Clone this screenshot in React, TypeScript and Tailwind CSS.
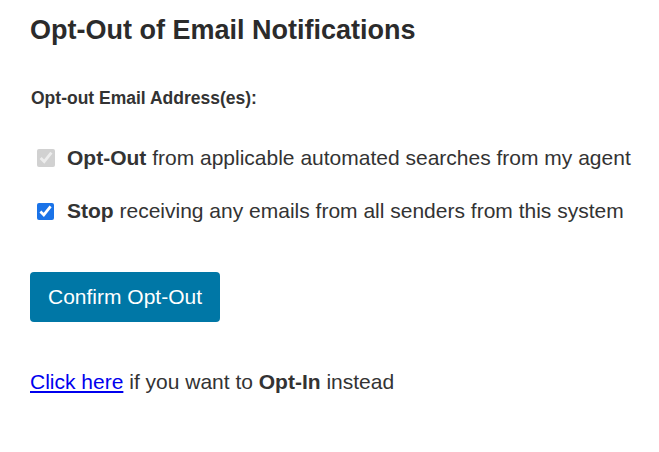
import React from "react";

export default function App() {
  return (
    <div className="w-[659px] h-[452px] bg-white text-[#333] pl-[31px] pt-[14px]" style={{ fontFamily: '"Liberation Sans", Arial, sans-serif' }}>
      <h1 className="text-[27px] font-bold leading-[32px] text-[#2b2b2b] -ml-[1px] whitespace-nowrap">Opt-Out of Email Notifications</h1>
      <div className="mt-[42px] text-[17.5px] font-bold leading-[20px] text-[#333] whitespace-nowrap">Opt-out Email Address(es):</div>
      <div className="mt-[38px] flex flex-col gap-[29px]">
        <label className="flex items-center gap-[12px] text-[21px] leading-[24px] whitespace-nowrap">
          <input type="checkbox" checked disabled readOnly className="w-[18px] h-[18px] ml-[6px] accent-[#c8c8c8] shrink-0" />
          <span><b>Opt-Out</b> from applicable automated searches from my agent</span>
        </label>
        <label className="flex items-center gap-[13px] text-[21px] leading-[24px] whitespace-nowrap">
          <input type="checkbox" defaultChecked className="w-[17px] h-[17px] ml-[6px] accent-[#1a73e8] shrink-0" />
          <span><b>Stop</b> receiving any emails from all senders from this system</span>
        </label>
      </div>
      <button className="mt-[49px] w-[190px] h-[50px] bg-[#0077a6] text-white text-[21px] rounded-[4px] -ml-[1px]">Confirm Opt-Out</button>
      <div className="mt-[48px] text-[21px] leading-[24px] -ml-[1px] whitespace-nowrap">
        <a href="#" className="text-[#0000ee] underline">Click here</a> if you want to <b>Opt-In</b> instead
      </div>
    </div>
  );
}
